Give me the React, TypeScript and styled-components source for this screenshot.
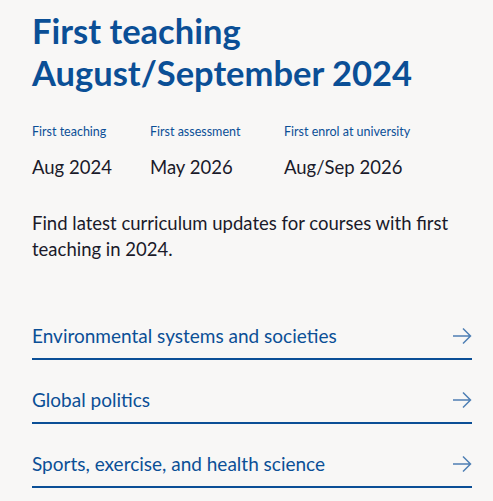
import styled, { createGlobalStyle } from "styled-components";

const GlobalStyle = createGlobalStyle`
  html, body {
    margin: 0;
    padding: 0;
    background: #f8f7f6;
  }
  body {
    font-family: Lato, "Noto Sans", sans-serif;
  }
`;

const dates = [
  { label: "First teaching", value: "Aug 2024", width: 118 },
  { label: "First assessment", value: "May 2026", width: 134 },
  { label: "First enrol at university", value: "Aug/Sep 2026", width: 180 },
];

const courses = [
  "Environmental systems and societies",
  "Global politics",
  "Sports, exercise, and health science",
];

function Arrow() {
  return (
    <svg width="20" height="18" viewBox="0 0 20 18" fill="none">
      <path d="M1 9H18.5M11 1.5L18.5 9L11 16.5" stroke="#4f7fb4" strokeWidth="1.5" />
    </svg>
  );
}

export default function App() {
  return (
    <>
      <GlobalStyle />
      <StWrapper>
        <StTitle>
          First teaching
          <br />
          August/September 2024
        </StTitle>
        <StDates>
          {dates.map((d) => (
            <StDate key={d.label} $width={d.width}>
              <StLabel>{d.label}</StLabel>
              <StValue>{d.value}</StValue>
            </StDate>
          ))}
        </StDates>
        <StText>
          Find latest curriculum updates for courses with first teaching in 2024.
        </StText>
        <StList>
          {courses.map((c) => (
            <StLink key={c} href="#">
              <span>{c}</span>
              <Arrow />
            </StLink>
          ))}
        </StList>
      </StWrapper>
    </>
  );
}

const StWrapper = styled.main`
  width: 440px;
  padding: 10px 22px 0 32px;
`;

const StTitle = styled.h1`
  margin: 0;
  color: #0b4f96;
  font-size: 34.5px;
  font-weight: 700;
  line-height: 42px;
`;

const StDates = styled.div`
  display: flex;
  margin-top: 30px;
`;

const StDate = styled.div<{ $width: number }>`
  display: flex;
  flex-direction: column;
  width: ${({ $width }) => $width}px;
`;

const StLabel = styled.span`
  color: #0b4f96;
  font-size: 12.5px;
  line-height: 16px;
`;

const StValue = styled.span`
  margin-top: 15px;
  color: #1a1a2a;
  font-size: 18.5px;
  line-height: 24px;
`;

const StText = styled.p`
  margin: 31px 0 0;
  color: #1a1a2a;
  font-size: 18.5px;
  line-height: 26px;
`;

const StList = styled.nav`
  display: flex;
  flex-direction: column;
  margin-top: 34px;
`;

const StLink = styled.a`
  display: flex;
  align-items: center;
  justify-content: space-between;
  padding: 28px 0 10px;
  line-height: 24px;
  border-bottom: 2px solid #0b4f96;
  color: #0b4f96;
  font-size: 19px;
  text-decoration: none;
`;
